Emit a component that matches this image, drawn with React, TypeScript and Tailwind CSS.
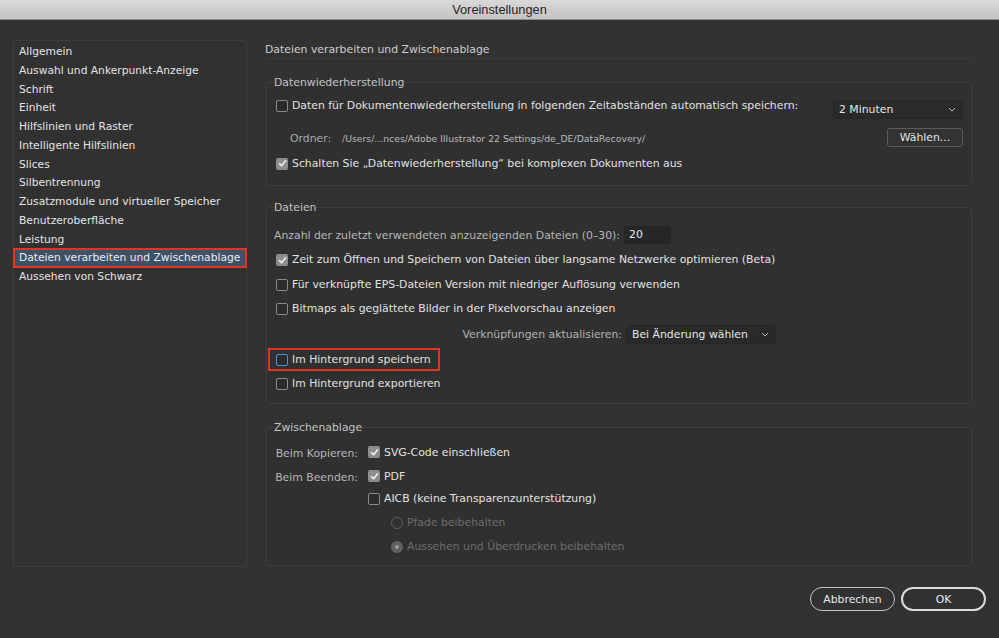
import React from "react";

const font = { fontFamily: '"DejaVu Sans", "Liberation Sans", sans-serif' };

const menu = [
  "Allgemein",
  "Auswahl und Ankerpunkt-Anzeige",
  "Schrift",
  "Einheit",
  "Hilfslinien und Raster",
  "Intelligente Hilfslinien",
  "Slices",
  "Silbentrennung",
  "Zusatzmodule und virtueller Speicher",
  "Benutzeroberfläche",
  "Leistung",
  "Dateien verarbeiten und Zwischenablage",
  "Aussehen von Schwarz",
];

function Check({ on = false, focus = false }: { on?: boolean; focus?: boolean }) {
  if (on) {
    return (
      <span className="flex h-[12px] w-[12px] shrink-0 items-center justify-center rounded-[2px] bg-[#8d8d8d]">
        <svg width="9" height="9" viewBox="0 0 9 9">
          <path d="M1.5 4.6 L3.6 6.8 L7.6 1.8" fill="none" stroke="#ececec" strokeWidth="1.6" strokeLinecap="round" strokeLinejoin="round" />
        </svg>
      </span>
    );
  }
  return (
    <span
      className={
        focus
          ? "h-[12px] w-[12px] shrink-0 rounded-[2px] border border-[#4a8fd8] bg-[#2b2b2b]"
          : "h-[12px] w-[12px] shrink-0 rounded-[2px] border border-[#8a8a8a] bg-[#2b2b2b]"
      }
    />
  );
}

function Radio({ on = false }: { on?: boolean }) {
  if (on) {
    return (
      <span className="flex h-[12px] w-[12px] shrink-0 items-center justify-center rounded-full bg-[#606060]">
        <span className="h-[4px] w-[4px] rounded-full bg-[#9a9a9a]" />
      </span>
    );
  }
  return <span className="h-[12px] w-[12px] shrink-0 rounded-full border border-[#5c5c5c]" />;
}

function Chevron() {
  return (
    <svg width="8" height="5" viewBox="0 0 8 5">
      <path d="M1 1 L4 4 L7 1" fill="none" stroke="#b4b4b4" strokeWidth="1" />
    </svg>
  );
}

function Row({ on, focus, text, h }: { on?: boolean; focus?: boolean; text: string; h: string }) {
  return (
    <div className={`ml-[2px] flex items-center gap-[4px] ${h}`}>
      <Check on={on} focus={focus} />
      <span className="text-[#e2e2e2]">{text}</span>
    </div>
  );
}

export default function App() {
  return (
    <div style={font} className="flex h-[638px] w-[999px] flex-col overflow-hidden bg-[#323232] text-[10.85px] leading-[14px]">
      <div className="flex h-[20px] shrink-0 items-center justify-center border-b border-[#8e8e8e] bg-gradient-to-b from-[#d9d9d9] to-[#c3c3c3]">
        <span style={{ fontFamily: '"Liberation Sans", sans-serif' }} className="text-[12.8px] text-[#262626]">
          Voreinstellungen
        </span>
      </div>

      <div className="flex gap-[18px] px-[13px] pt-[20px]">
        <div className="h-[527px] w-[234px] shrink-0 rounded-[3px] border border-[#3d3d3d] bg-[#313131] pt-[1.2px] text-[10.7px]">
          {menu.map((m, i) =>
            i === 11 ? (
              <div
                key={m}
                className="-mx-px -my-[0.625px] flex h-[20px] items-center border-2 border-[#e3341d] bg-[#3d5269] pl-[4px] pt-px text-[#ececec]"
              >
                {m}
              </div>
            ) : (
              <div key={m} className="flex h-[18.75px] items-center pl-[5px] pt-px text-[#e4e4e4]">
                {m}
              </div>
            )
          )}
        </div>

        <div className="w-[707px] pt-[3px]">
          <div className="h-[16px] border-b border-[#3b3b3b] text-[#cdcdcd]">Dateien verarbeiten und Zwischenablage</div>

          <fieldset className="ml-px mt-[16px] rounded-[3px] border border-[#3e3e3e] bg-[#303030] pb-[15px] pl-[7px] pr-[8px]">
            <legend className="h-[14px] pt-px text-[#c4c4c4]">Datenwiederherstellung</legend>
            <div className="mt-[10px] flex h-[20px] items-start justify-between">
              <div className="ml-[2px] flex items-center gap-[4px]">
                <Check />
                <span className="text-[#e2e2e2]">
                  Daten für Dokumentenwiederherstellung in folgenden Zeitabständen automatisch speichern:
                </span>
              </div>
              <div className="mt-[1px] flex h-[19px] w-[130px] items-center justify-between rounded-[3px] border border-[#262626] bg-[#2a2a2a] pl-[5px] pr-[6px] text-[#e6e6e6]">
                <span className="pt-px">2 Minuten</span>
                <Chevron />
              </div>
            </div>
            <div className="mt-[9px] flex h-[19px] items-center justify-between">
              <div className="flex items-center pt-[2px]">
                <span className="ml-[16px] w-[52px] text-[#a9a9a9]">Ordner:</span>
                <span className="text-[9.3px] text-[#b9b9b9]">/Users/...nces/Adobe Illustrator 22 Settings/de_DE/DataRecovery/</span>
              </div>
              <div className="flex h-[19px] w-[76px] items-center justify-center rounded-[3px] border border-[#5b5b5b] bg-[#333333] text-[#e2e2e2]">
                Wählen...
              </div>
            </div>
            <Row on text="Schalten Sie „Datenwiederherstellung“ bei komplexen Dokumenten aus" h="mt-[9px] h-[14px] pt-px" />
          </fieldset>

          <fieldset className="ml-px mt-[14px] rounded-[3px] border border-[#3e3e3e] bg-[#303030] pb-[8px] pl-[7px] pr-[8px]">
            <legend className="h-[14px] pt-px text-[#c4c4c4]">Dateien</legend>
            <div className="mt-[8px] flex h-[25px] items-center gap-[4px]">
              <span className="pt-[3px] text-[#b6b6b6]">Anzahl der zuletzt verwendeten anzuzeigenden Dateien (0–30):</span>
              <div className="flex h-[18px] w-[47px] items-center bg-[#262626] pl-[5px] pt-px text-[#e6e6e6]">20</div>
            </div>
            <Row on text="Zeit zum Öffnen und Speichern von Dateien über langsame Netzwerke optimieren (Beta)" h="h-[25px] pt-px" />
            <Row text="Für verknüpfte EPS-Dateien Version mit niedriger Auflösung verwenden" h="h-[24px] pt-px" />
            <Row text="Bitmaps als geglättete Bilder in der Pixelvorschau anzeigen" h="h-[24px] pt-px" />
            <div className="flex h-[28px] items-center gap-[4px]">
              <span className="w-[348px] pt-[2px] text-right text-[#b2b2b2]">Verknüpfungen aktualisieren:</span>
              <div className="flex h-[19px] w-[150px] items-center justify-between rounded-[3px] border border-[#262626] bg-[#2a2a2a] pl-[5px] pr-[6px] text-[#e6e6e6]">
                <span className="pt-px">Bei Änderung wählen</span>
                <Chevron />
              </div>
            </div>
            <div className="-ml-[6px] flex h-[23px] w-[172px] items-center gap-[4px] border-2 border-[#e3341d] pl-[6px] pt-px">
              <Check focus />
              <span className="text-[#e2e2e2]">Im Hintergrund speichern</span>
            </div>
            <Row text="Im Hintergrund exportieren" h="h-[24px] pt-px" />
          </fieldset>

          <fieldset className="ml-px mt-[16px] rounded-[3px] border border-[#3e3e3e] bg-[#303030] pb-[7px] pl-[7px] pr-[8px]">
            <legend className="h-[14px] pt-px text-[#c4c4c4]">Zwischenablage</legend>
            <div className="mt-[6px] grid grid-cols-[84px_1fr] gap-x-[10px]">
              <div className="flex h-[24px] items-center justify-end pt-[3px] text-[#b6b6b6]">Beim Kopieren:</div>
              <div className="flex h-[24px] items-center gap-[4px]">
                <Check on />
                <span className="pt-px text-[#e2e2e2]">SVG-Code einschließen</span>
              </div>
              <div className="flex h-[23px] items-center justify-end pt-[5px] text-[#b6b6b6]">Beim Beenden:</div>
              <div className="flex h-[23px] items-center gap-[4px] pt-px">
                <Check on />
                <span className="pt-px text-[#e2e2e2]">PDF</span>
              </div>
              <div />
              <div className="flex h-[22px] items-center gap-[4px] pt-px">
                <Check />
                <span className="text-[#e2e2e2]">AICB (keine Transparenzunterstützung)</span>
              </div>
              <div />
              <div className="ml-[23px] flex h-[25px] items-center gap-[4px] pt-[2px]">
                <Radio />
                <span className="text-[#6c6c6c]">Pfade beibehalten</span>
              </div>
              <div />
              <div className="ml-[23px] flex h-[24px] items-center gap-[4px] pt-px">
                <Radio on />
                <span className="text-[#6c6c6c]">Aussehen und Überdrucken beibehalten</span>
              </div>
            </div>
          </fieldset>
        </div>
      </div>

      <div className="mt-[20px] flex justify-end gap-[6px] pr-[13px]">
        <div className="flex h-[24px] w-[85px] items-center justify-center rounded-full border-[1.5px] border-[#c4c4c4] pt-px text-[#e8e8e8]">
          Abbrechen
        </div>
        <div className="flex h-[24px] w-[85px] items-center justify-center rounded-full border-2 border-[#dcdcdc] pt-px text-[#ececec]">
          OK
        </div>
      </div>
    </div>
  );
}
